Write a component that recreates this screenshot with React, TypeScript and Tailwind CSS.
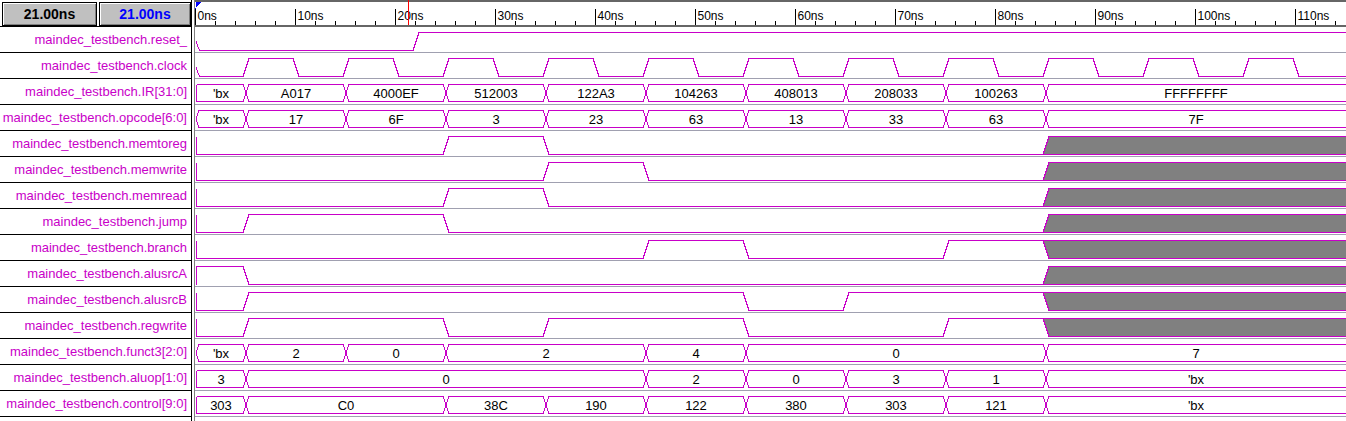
import React from "react";

const W = 1151;
const X = (t: number) => 10 * t + 1;
const HI = 5.5;
const LO = 23.5;
const MID = 14.5;
const BT = 5.5;
const BB = 22.5;
const BM = 14;
const D = 3;
const MAG = "#c800c8";

type BitSig = { name: string; kind: "bit"; start: "x" | 0 | 1; edges: number[]; z?: number };
type BusSig = { name: string; kind: "bus"; open: "v" | "<"; segs: [number, string][] };
type Sig = BitSig | BusSig;

const clockEdges: number[] = [];
for (let t = 5; t <= 110; t += 5) clockEdges.push(t);

const signals: Sig[] = [
  { name: "maindec_testbench.reset_", kind: "bit", start: "x", edges: [22] },
  { name: "maindec_testbench.clock", kind: "bit", start: "x", edges: clockEdges },
  {
    name: "maindec_testbench.IR[31:0]",
    kind: "bus",
    open: "v",
    segs: [
      [0, "'bx"], [5, "A017"], [15, "4000EF"], [25, "512003"], [35, "122A3"],
      [45, "104263"], [55, "408013"], [65, "208033"], [75, "100263"], [85, "FFFFFFFF"],
    ],
  },
  {
    name: "maindec_testbench.opcode[6:0]",
    kind: "bus",
    open: "<",
    segs: [
      [0, "'bx"], [5, "17"], [15, "6F"], [25, "3"], [35, "23"],
      [45, "63"], [55, "13"], [65, "33"], [75, "63"], [85, "7F"],
    ],
  },
  { name: "maindec_testbench.memtoreg", kind: "bit", start: 0, edges: [25, 35], z: 85 },
  { name: "maindec_testbench.memwrite", kind: "bit", start: 0, edges: [35, 45], z: 85 },
  { name: "maindec_testbench.memread", kind: "bit", start: 0, edges: [25, 35], z: 85 },
  { name: "maindec_testbench.jump", kind: "bit", start: 0, edges: [5, 25], z: 85 },
  { name: "maindec_testbench.branch", kind: "bit", start: 0, edges: [45, 55, 75], z: 85 },
  { name: "maindec_testbench.alusrcA", kind: "bit", start: 1, edges: [5], z: 85 },
  { name: "maindec_testbench.alusrcB", kind: "bit", start: 0, edges: [5, 55, 65], z: 85 },
  { name: "maindec_testbench.regwrite", kind: "bit", start: 0, edges: [5, 25, 35, 55, 75], z: 85 },
  {
    name: "maindec_testbench.funct3[2:0]",
    kind: "bus",
    open: "<",
    segs: [[0, "'bx"], [5, "2"], [15, "0"], [25, "2"], [45, "4"], [55, "0"], [85, "7"]],
  },
  {
    name: "maindec_testbench.aluop[1:0]",
    kind: "bus",
    open: "v",
    segs: [[0, "3"], [5, "0"], [45, "2"], [55, "0"], [65, "3"], [75, "1"], [85, "'bx"]],
  },
  {
    name: "maindec_testbench.control[9:0]",
    kind: "bus",
    open: "v",
    segs: [
      [0, "303"], [5, "C0"], [25, "38C"], [35, "190"], [45, "122"],
      [55, "380"], [65, "303"], [75, "121"], [85, "'bx"],
    ],
  },
];

function BitWave({ sig }: { sig: BitSig }) {
  let d = "";
  let level: 0 | 1;
  if (sig.start === "x") {
    d = `M ${X(0)} ${MID} L ${X(0) + 3.5} ${LO}`;
    level = 0;
  } else {
    level = sig.start;
    d = level === 0 ? `M ${X(0) + 0.5} ${HI} V ${LO}` : `M ${X(0) + 0.5} ${LO} V ${HI}`;
  }
  for (const t of sig.edges) {
    const y0 = level ? HI : LO;
    const y1 = level ? LO : HI;
    d += ` L ${X(t) - D} ${y0} L ${X(t) + D} ${y1}`;
    level = level ? 0 : 1;
  }
  const yEnd = level ? HI : LO;
  let gray: React.ReactNode = null;
  if (sig.z !== undefined) {
    const zx = X(sig.z);
    d += ` L ${zx - D} ${yEnd}`;
    if (level === 0) {
      gray = (
        <>
          <polygon points={`${zx - D},${LO} ${zx + D},${HI} ${W},${HI} ${W},${LO}`} fill="#808080" />
          <path d={`M ${zx - D} ${LO} L ${zx + D} ${HI} H ${W} M ${zx - D} ${LO} H ${W}`} stroke={MAG} fill="none" />
        </>
      );
    } else {
      gray = (
        <>
          <polygon points={`${zx - D},${HI} ${W},${HI} ${W},${LO} ${zx + D},${LO}`} fill="#808080" />
          <path d={`M ${zx - D} ${HI} H ${W} M ${zx - D} ${HI} L ${zx + D} ${LO} H ${W}`} stroke={MAG} fill="none" />
        </>
      );
    }
  } else {
    d += ` H ${W}`;
  }
  return (
    <>
      {gray}
      <path d={d} stroke={MAG} fill="none" />
    </>
  );
}

function BusWave({ sig }: { sig: BusSig }) {
  return (
    <>
      {sig.segs.map(([a, label], i) => {
        const last = i === sig.segs.length - 1;
        const b = last ? null : sig.segs[i + 1][0];
        const first = i === 0;
        let leftTop: number;
        let leftTail: string;
        if (first && sig.open === "v") {
          leftTop = X(0) + 0.5;
          leftTail = `V ${BT}`;
        } else if (first) {
          leftTop = X(0) + D;
          leftTail = `L ${X(0)} ${BM} L ${leftTop} ${BT}`;
        } else {
          leftTop = X(a) + D;
          leftTail = `L ${X(a)} ${BM} L ${leftTop} ${BT}`;
        }
        let d: string;
        if (b === null) {
          d = `M ${leftTop} ${BT} H ${W} M ${W} ${BB} H ${leftTop} ${leftTail}`;
        } else {
          d = `M ${leftTop} ${BT} H ${X(b) - D} L ${X(b)} ${BM} L ${X(b) - D} ${BB} H ${leftTop} ${leftTail}`;
        }
        const cx = (X(a) + (b === null ? W : X(b))) / 2;
        return (
          <g key={i}>
            <path d={d} stroke={MAG} fill="none" />
            <text
              x={cx}
              y={19}
              textAnchor="middle"
              fontSize={13}
              fill="#000000"
              style={{ fontFamily: '"Liberation Sans", Arial, sans-serif' }}
              shapeRendering="auto"
            >
              {label}
            </text>
          </g>
        );
      })}
    </>
  );
}

function Ruler() {
  const ticks: number[] = [];
  for (let t = 0; t <= 114; t += 2) ticks.push(t);
  return (
    <svg width={W} height={27} shapeRendering="crispEdges" className="block">
      <rect x={0} y={0} width={W} height={2} fill="#666666" />
      {ticks.map((t) => {
        const major = t % 10 === 0;
        const x = X(t) - 0.5;
        return (
          <g key={t}>
            <line x1={x} x2={x} y1={major ? 9 : 21} y2={25} stroke="#000000" />
            {major && (
              <text
                x={X(t) + 1.5}
                y={19.5}
                fontSize={12}
                fill="#000000"
                style={{ fontFamily: '"Liberation Sans", Arial, sans-serif' }}
              >
                {t}ns
              </text>
            )}
          </g>
        );
      })}
      <rect x={0} y={25} width={W} height={2} fill="#666666" />
      <polygon points="0.5,2 6,2 0.5,8.5" fill="#0000ff" />
      <line x1={213.5} x2={213.5} y1={0} y2={25} stroke="#ff0000" />
    </svg>
  );
}

export default function App() {
  return (
    <div
      className="flex h-[421px] w-[1346px] overflow-hidden bg-white"
      style={{ fontFamily: '"Liberation Sans", Arial, sans-serif' }}
    >
      {/* signal names */}
      <div className="flex w-[192px] shrink-0 flex-col border-r border-black">
        <div className="flex h-[27px] shrink-0 gap-[2px] border-b border-black pl-[2px] pt-[2px]">
          <div className="flex w-[95px] items-center justify-center border border-black bg-[#c0c0c0] text-[14px] font-bold text-black shadow-[inset_1px_1px_0_#ffffff,inset_-1px_-1px_0_#808080]">
            21.00ns
          </div>
          <div className="flex flex-1 items-center justify-center border border-black bg-[#c0c0c0] text-[14px] font-bold text-[#0000ff] shadow-[inset_1px_1px_0_#ffffff,inset_-1px_-1px_0_#808080]">
            21.00ns
          </div>
        </div>
        {signals.map((s) => (
          <div
            key={s.name}
            className="flex h-[26px] shrink-0 items-center justify-end whitespace-nowrap border-b border-black pr-[4px] text-[13px] text-[#c800c8]"
          >
            {s.name}
          </div>
        ))}
      </div>

      <div className="w-[2px] shrink-0 bg-white" />
      <div className="w-px shrink-0 bg-[#808080]" />

      {/* waveforms */}
      <div className="flex min-w-0 flex-1 flex-col">
        <div className="h-[27px] shrink-0">
          <Ruler />
        </div>
        {signals.map((s) => (
          <div key={s.name} className="h-[26px] shrink-0 border-b border-[#a0a0b0]">
            <svg width={W} height={25} shapeRendering="crispEdges" className="block">
              {s.kind === "bit" ? <BitWave sig={s} /> : <BusWave sig={s} />}
            </svg>
          </div>
        ))}
      </div>
    </div>
  );
}
